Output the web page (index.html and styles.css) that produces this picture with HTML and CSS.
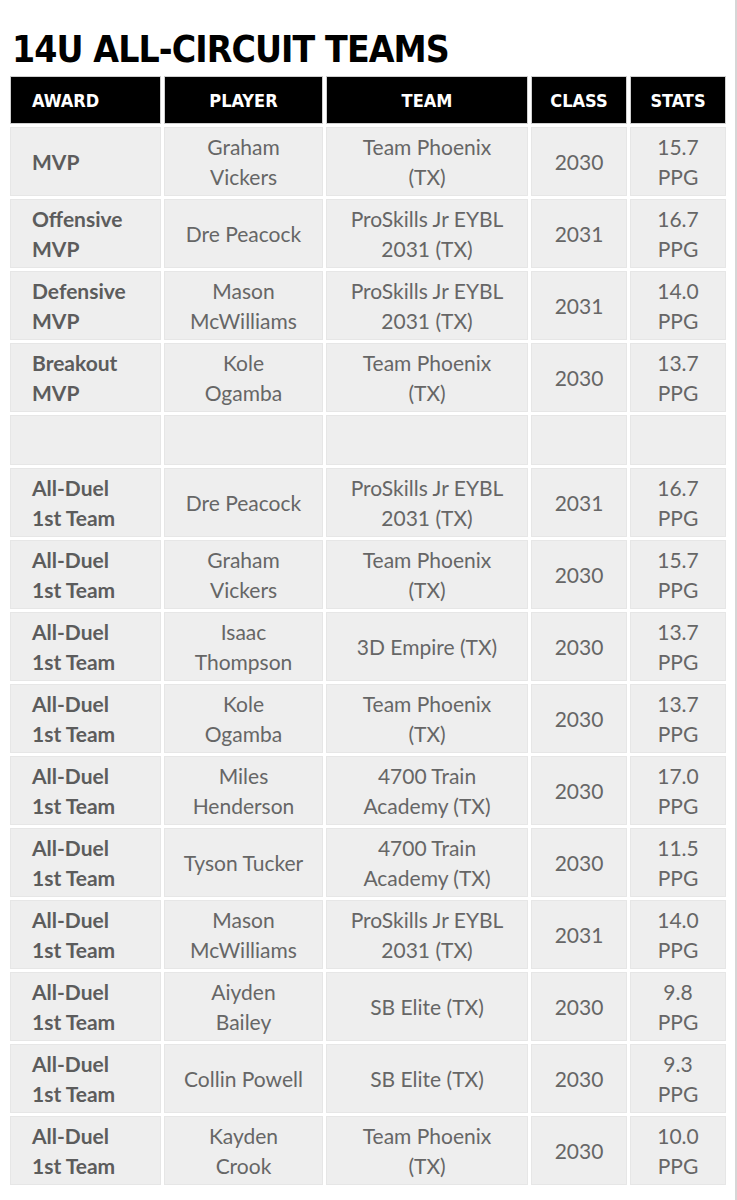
FILE: index.html
```html
<!DOCTYPE html>
<html>
<head>
<meta charset="utf-8">
<link rel="stylesheet" href="styles.css">
</head>
<body>
<div class="page">
  <h1 class="title">14U ALL-CIRCUIT TEAMS</h1>
  <table class="teams">
    <colgroup>
      <col class="c-award"><col class="c-player"><col class="c-team"><col class="c-class"><col class="c-stats">
    </colgroup>
    <thead>
      <tr><th class="left">AWARD</th><th>PLAYER</th><th>TEAM</th><th>CLASS</th><th>STATS</th></tr>
    </thead>
    <tbody>
      <tr><td class="award">MVP</td><td>Graham<br>Vickers</td><td>Team Phoenix<br>(TX)</td><td>2030</td><td>15.7<br>PPG</td></tr>
      <tr><td class="award">Offensive<br>MVP</td><td>Dre Peacock</td><td>ProSkills Jr EYBL<br>2031 (TX)</td><td>2031</td><td>16.7<br>PPG</td></tr>
      <tr><td class="award">Defensive<br>MVP</td><td>Mason<br>McWilliams</td><td>ProSkills Jr EYBL<br>2031 (TX)</td><td>2031</td><td>14.0<br>PPG</td></tr>
      <tr><td class="award">Breakout<br>MVP</td><td>Kole<br>Ogamba</td><td>Team Phoenix<br>(TX)</td><td>2030</td><td>13.7<br>PPG</td></tr>
      <tr class="empty"><td></td><td></td><td></td><td></td><td></td></tr>
      <tr><td class="award">All-Duel<br>1st Team</td><td>Dre Peacock</td><td>ProSkills Jr EYBL<br>2031 (TX)</td><td>2031</td><td>16.7<br>PPG</td></tr>
      <tr><td class="award">All-Duel<br>1st Team</td><td>Graham<br>Vickers</td><td>Team Phoenix<br>(TX)</td><td>2030</td><td>15.7<br>PPG</td></tr>
      <tr><td class="award">All-Duel<br>1st Team</td><td>Isaac<br>Thompson</td><td>3D Empire (TX)</td><td>2030</td><td>13.7<br>PPG</td></tr>
      <tr><td class="award">All-Duel<br>1st Team</td><td>Kole<br>Ogamba</td><td>Team Phoenix<br>(TX)</td><td>2030</td><td>13.7<br>PPG</td></tr>
      <tr><td class="award">All-Duel<br>1st Team</td><td>Miles<br>Henderson</td><td>4700 Train<br>Academy (TX)</td><td>2030</td><td>17.0<br>PPG</td></tr>
      <tr><td class="award">All-Duel<br>1st Team</td><td>Tyson Tucker</td><td>4700 Train<br>Academy (TX)</td><td>2030</td><td>11.5<br>PPG</td></tr>
      <tr><td class="award">All-Duel<br>1st Team</td><td>Mason<br>McWilliams</td><td>ProSkills Jr EYBL<br>2031 (TX)</td><td>2031</td><td>14.0<br>PPG</td></tr>
      <tr><td class="award">All-Duel<br>1st Team</td><td>Aiyden<br>Bailey</td><td>SB Elite (TX)</td><td>2030</td><td>9.8<br>PPG</td></tr>
      <tr><td class="award">All-Duel<br>1st Team</td><td>Collin Powell</td><td>SB Elite (TX)</td><td>2030</td><td>9.3<br>PPG</td></tr>
      <tr><td class="award">All-Duel<br>1st Team</td><td>Kayden<br>Crook</td><td>Team Phoenix<br>(TX)</td><td>2030</td><td>10.0<br>PPG</td></tr>
    </tbody>
  </table>
</div>
</body>
</html>
```

FILE: styles.css
```css
html, body {
  margin: 0;
  padding: 0;
  background: #fff;
}

.page {
  width: 737px;
  min-height: 1200px;
  border-right: 2px solid #d6d6d6;
  box-sizing: border-box;
  padding: 27px 0 0 7px;
}

.title {
  margin: 0 0 0 5px;
  font-family: "DejaVu Sans Condensed", "DejaVu Sans", sans-serif;
  font-stretch: condensed;
  font-weight: bold;
  font-size: 37px;
  line-height: 46px;
  color: #000;
  letter-spacing: -0.9px;
}

.teams {
  border-collapse: separate;
  border-spacing: 3px;
  table-layout: fixed;
  width: 722px;
  font-family: Lato, "Open Sans", sans-serif;
}

.c-award { width: 151px; }
.c-player { width: 159px; }
.c-team { width: 202px; }
.c-class { width: 96px; }
.c-stats { width: 96px; }

.teams th {
  background: #000;
  color: #fff;
  border: 1px solid #cfcfcf;
  height: 46px;
  padding: 0;
  font-family: "DejaVu Sans Condensed", "DejaVu Sans", sans-serif;
  font-stretch: condensed;
  font-weight: bold;
  font-size: 18px;
  text-align: center;
}

.teams th.left {
  text-align: left;
  padding-left: 21px;
}

.teams td {
  background: #eeeeee;
  border: 1px solid #e6e6e6;
  height: 61px;
  padding: 3px 2px;
  text-align: center;
  vertical-align: middle;
  font-size: 21px;
  line-height: 30px;
  color: #666;
}

.teams td.award {
  text-align: left;
  padding-left: 21px;
  font-weight: bold;
  color: #5c5c5c;
}

.teams tr.empty td {
  height: 42px;
}
```
